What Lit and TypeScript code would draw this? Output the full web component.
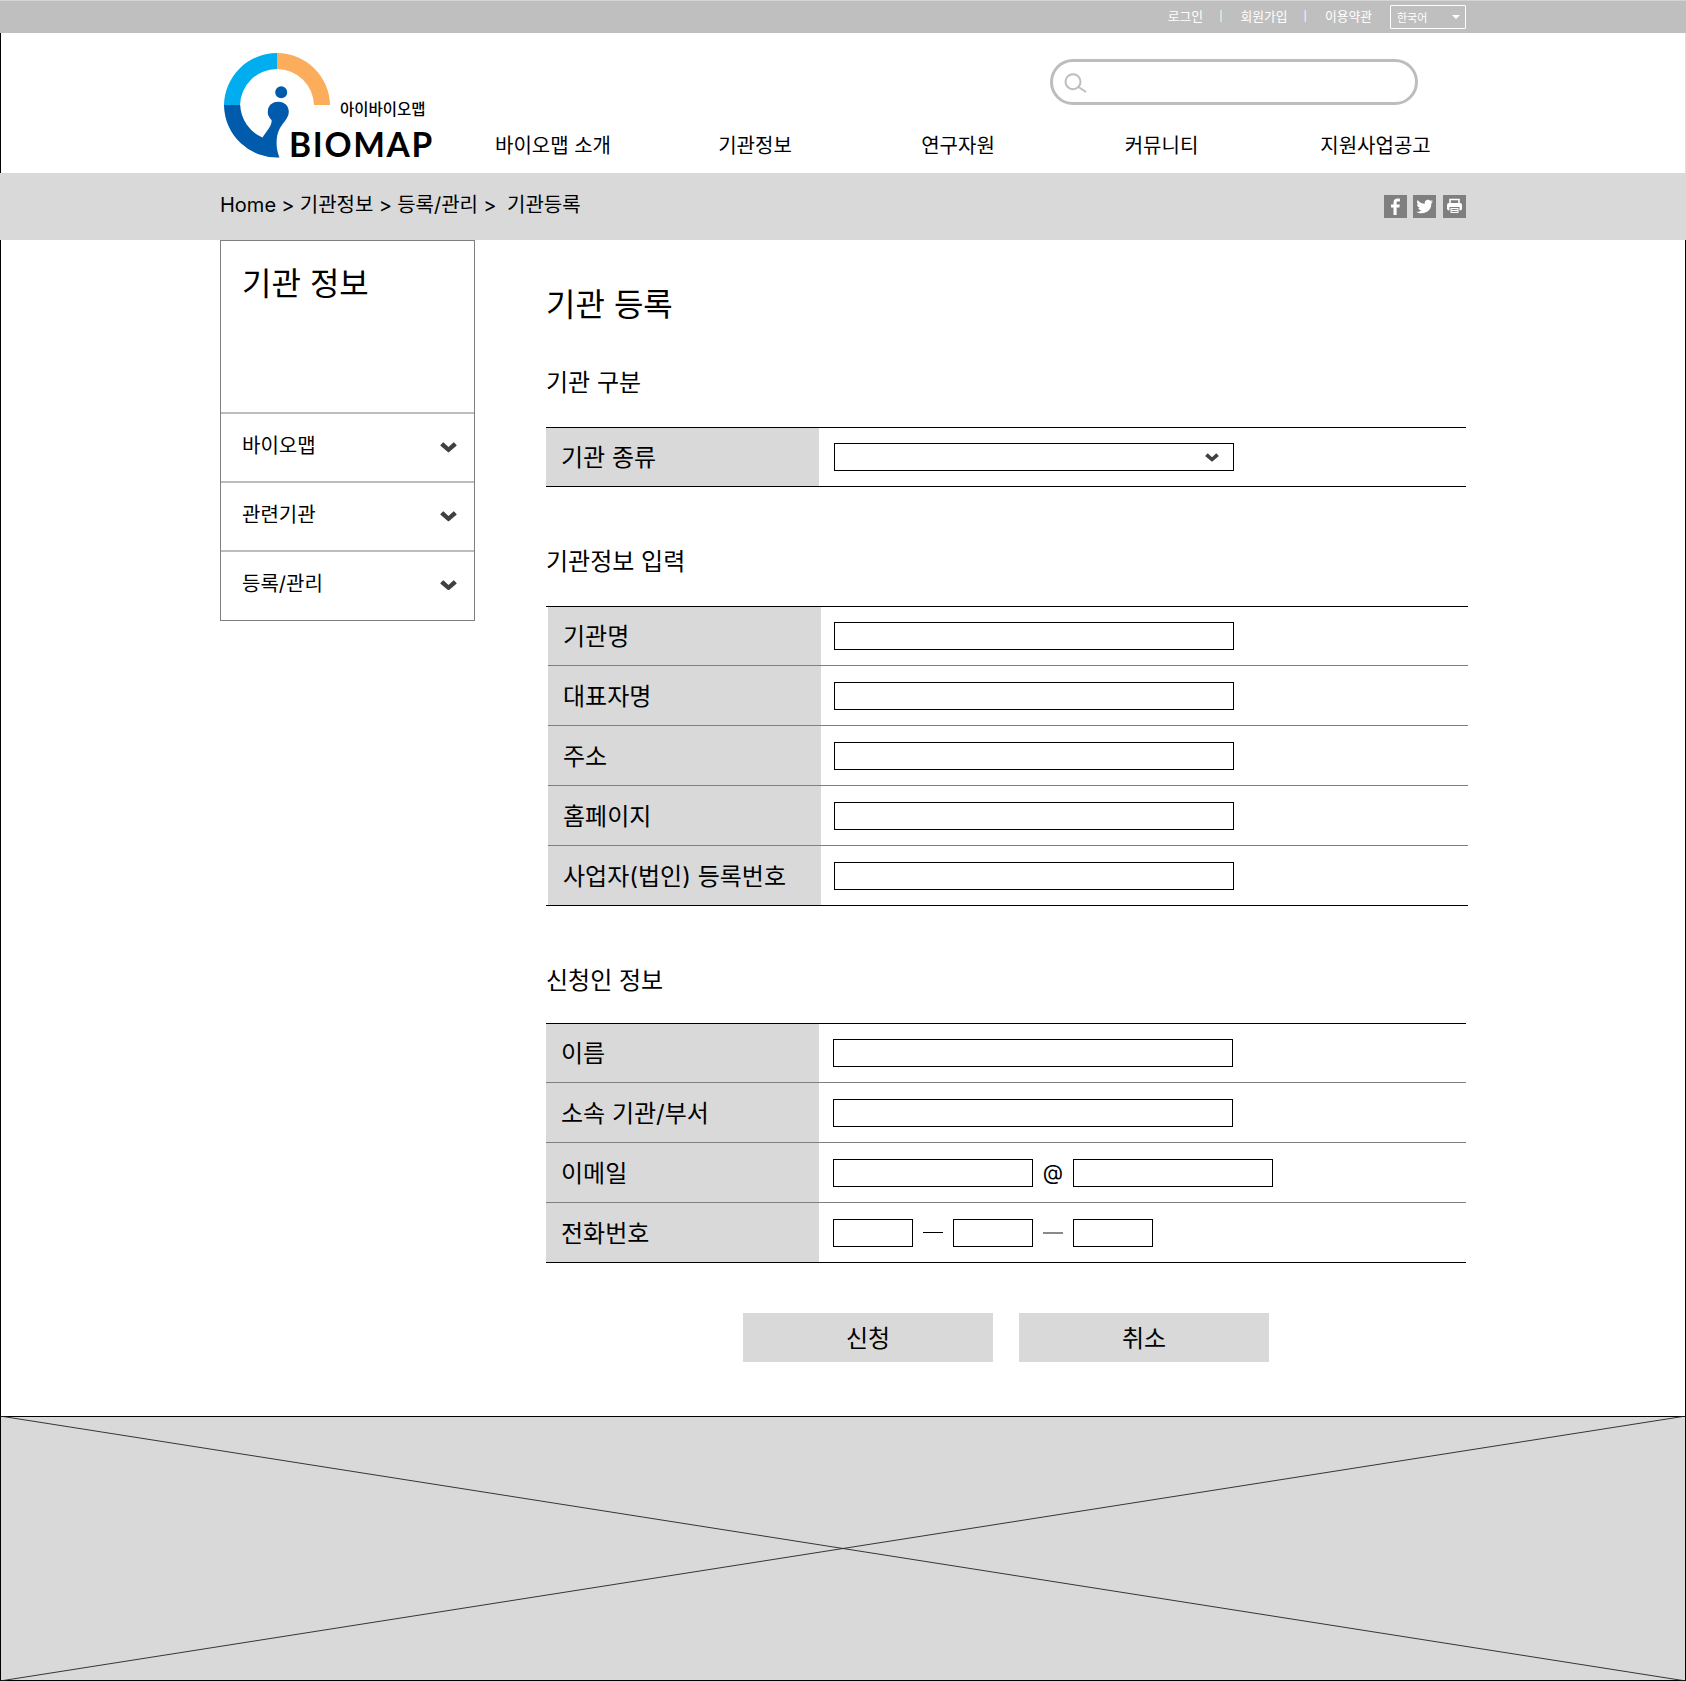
import { LitElement, html, css, svg } from 'lit';
import { customElement } from 'lit/decorators.js';

// 사이드메뉴(17x10)와 셀렉트(14x9)에 같이 쓰는 화살표
const chevron = (w: number, h: number) => html`
  <svg class="chev" width=${w} height=${h} viewBox="0 0 17 10.500" aria-hidden="true">
    <path d="M0.500 3 L2.900 0.500 Q3.200 0.200 3.600 0.500 L8.500 4.900 L13.400 0.500 Q13.800 0.200 14.100 0.500 L16.500 3 Q16.800 3.300 16.500 3.700 L8.900 10.200 Q8.500 10.500 8.100 10.200 L0.500 3.700 Q0.200 3.300 0.500 3 Z" fill="#404040" />
  </svg>
`;

// 로고: 링 세 조각과 i 모양
const logo = svg`
  <path d="M277 53 A53 53 0 0 1 330 105 H314 A37 37 0 0 0 277 69 Z" fill="#fbad5b" />
  <path d="M224 105 A53 53 0 0 1 277 53 V69 A37 37 0 0 0 240 105 Z" fill="#00aeef" />
  <path d="M224 105 H240.200 A37 37 0 0 0 262.500 137.500 C266.500 131 272.500 125 271.500 120 C268.500 117 267.500 114 267.800 111.700
    C268 105 272.500 101.700 278.500 101.700 C284.500 101.700 288.800 106 288.800 111.700 C288.800 118 283.500 122 280 128
    C275.500 136 275.500 148 279.500 157.500 A53 53 0 0 1 224 105 Z" fill="#005bac" />
  <circle cx="281.200" cy="92.300" r="6" fill="#005bac" />
`;

@customElement('app-root')
export class AppRoot extends LitElement {
  static styles = css`
    :host {
      display: block;
      width: 1686px;
      font-family: Inter, "Noto Sans CJK KR", sans-serif;
      color: #000;
      background: #fff;
    }
    * { box-sizing: border-box; }

    .topbar {
      height: 33px;
      background: #bfbfbf;
      border-top: 1px solid #d4d4d4;
      display: flex;
      justify-content: flex-end;
      align-items: center;
      padding-right: 220px;
      color: #fff;
      font-size: 12.800px;
    }
    .topbar > span { margin-bottom: 3px; }
    .topbar .sep { margin: 0 18px 3px 16px; font-size: 10px; }
    .lang {
      width: 76px;
      height: 24px;
      margin-left: 18px;
      border: 1px solid #fff;
      border-radius: 1px;
      display: flex;
      align-items: center;
      justify-content: space-between;
      padding: 0 5px 0 6px;
      font-size: 11px;
    }
    .lang i {
      border: 4px solid transparent;
      border-top-color: #fff;
      border-bottom: 0;
    }

    .header {
      height: 140px;
      display: flex;
      padding-left: 219px;
      border-left: 1px solid #000;
      border-right: 1px solid #ddd;
    }
    .logo { display: block; flex: none; }
    .logo .sub { font-size: 15.500px; font-weight: 500; }
    .logo .brand { font-size: 33.500px; font-weight: 700; font-family: Lato, sans-serif; letter-spacing: 1.700px; }
    .head-right { display: flex; flex-direction: column; }
    .search {
      width: 368px;
      height: 46px;
      margin: 26px 0 0 598px;
      border: 3px solid #bdbdbd;
      border-radius: 23px;
      display: flex;
      align-items: center;
      padding-left: 10px;
    }
    .nav {
      display: grid;
      grid-template-columns: 202px 202px 204px 203px 225px;
      margin-top: 27px;
      font-size: 20px;
      line-height: 28px;
      text-align: center;
    }

    .crumbs {
      height: 67px;
      background: #d9d9d9;
      display: flex;
      justify-content: space-between;
      align-items: center;
      padding: 0 220px;
      font-size: 20px;
    }
    .crumbs .trail { white-space: pre; margin-bottom: 7px; word-spacing: -0.350px; }
    .share { display: flex; gap: 6px; }
    .share svg { display: block; }
    .share svg:last-child { margin-left: 1px; }

    .body {
      display: flex;
      padding-left: 219px;
      height: 1176px;
      border-left: 1px solid #000;
      border-right: 1px solid #000;
    }
    .side {
      width: 255px;
      height: 381px;
      border: 1px solid #7f7f7f;
      display: flex;
      flex-direction: column;
    }
    .side h2 {
      margin: 0;
      height: 171px;
      padding: 21px 21px;
      font-size: 32px;
      line-height: 44px;
      font-weight: 400;
    }
    .side .item {
      height: 69px;
      border-top: 2px solid #bdbdbd;
      display: flex;
      align-items: center;
      justify-content: space-between;
      padding: 0 17px 6px 21px;
      font-size: 20px;
    }
    .side .item:last-child { height: 70px; padding-bottom: 8px; }
    .side .item .chev { margin-top: 6px; }

    .main { margin-left: 71px; width: 920px; }
    .main h1 {
      margin: 0;
      padding-top: 42px;
      font-size: 32px;
      line-height: 46px;
      font-weight: 400;
    }
    .main h3 {
      margin: 0;
      font-size: 24px;
      line-height: 34px;
      font-weight: 400;
    }
    .form {
      border-top: 1px solid #000;
      border-bottom: 1px solid #000;
      margin-top: 27px;
    }
    .row {
      height: 60px;
      display: flex;
      align-items: stretch;
    }
    .row:first-child { height: 58px; }
    .row + .row { border-top: 1px solid #7f7f7f; }
    .row .label {
      width: 273px;
      background: #d9d9d9;
      display: flex;
      align-items: center;
      padding: 0 0 3px 15px;
      font-size: 24px;
    }
    .row .value {
      flex: 1;
      display: flex;
      align-items: center;
      padding-left: 15px;
      font-size: 21px;
    }
    .box {
      height: 28px;
      border: 1px solid #000;
      background: #fff;
      display: flex;
      align-items: center;
      justify-content: flex-end;
      padding-right: 14px;
    }
    .box.full { width: 400px; }
    .box.mail { width: 200px; }
    .box.tel { width: 80px; padding: 0; }
    .at { width: 40px; text-align: center; }
    .dash { width: 40px; display: flex; justify-content: center; }
    .dash::before { content: ''; width: 20px; height: 1px; background: #000; }
    .dash.grey::before { background: #8a8a8a; height: 2px; }

    .sec1 { margin-top: 38px; }
    .sec2 { margin-top: 58px; }
    .sec2 .form { width: 922px; padding-left: 2px; }
    .sec2 .row .value { padding-left: 13px; }
    .sec3 { margin-top: 58px; }
    .sec3 .form { margin-top: 25px; }
    .sec3 .row .value { padding-left: 14px; }

    .actions {
      display: flex;
      gap: 26px;
      padding-left: 197px;
      margin-top: 50px;
    }
    .actions div {
      width: 250px;
      height: 49px;
      background: #d9d9d9;
      display: flex;
      align-items: center;
      justify-content: center;
      padding-bottom: 3px;
      font-size: 24px;
    }

    .footer { display: block; width: 1686px; height: 265px; }
  `;

  private row(label: string, value: unknown) {
    return html`<div class="row"><div class="label">${label}</div><div class="value">${value}</div></div>`;
  }

  render() {
    const full = html`<div class="box full"></div>`;
    return html`
      <div class="topbar">
        <span>로그인</span><span class="sep">|</span>
        <span>회원가입</span><span class="sep">|</span>
        <span>이용약관</span>
        <div class="lang"><span>한국어</span><i></i></div>
      </div>

      <div class="header">
        <svg class="logo" width="232" height="140" viewBox="220 33 232 140">
          ${logo}
          <text class="sub" x="340" y="115">아이바이오맵</text>
          <text class="brand" x="289" y="157">BIOMAP</text>
        </svg>
        <div class="head-right">
          <div class="search">
            <svg width="24" height="24" viewBox="0 0 24 24" fill="none" stroke="#bdbdbd" stroke-width="2">
              <circle cx="10" cy="11.700" r="7.500" />
              <path d="M15.500 17 L23 22" />
            </svg>
          </div>
          <div class="nav">
            <span>바이오맵 소개</span>
            <span>기관정보</span>
            <span>연구자원</span>
            <span>커뮤니티</span>
            <span>지원사업공고</span>
          </div>
        </div>
      </div>

      <div class="crumbs">
        <div class="trail">Home &gt; 기관정보 &gt; 등록/관리 &gt;  기관등록</div>
        <div class="share">
          <svg width="23" height="23" viewBox="0 0 23 23">
            <rect width="23" height="23" fill="#7f7f7f" />
            <path d="M12.600 20 V12.600 H15.400 L15.800 9.600 H12.600 V7.800 C12.600 6.900 12.900 6.400 14 6.400 H15.900 V3.700 C15.500 3.600 14.600 3.500 13.500 3.500 C11.100 3.500 9.500 5 9.500 7.500 V9.600 H7 V12.600 H9.500 V20 Z" fill="#fff" />
          </svg>
          <svg width="23" height="23" viewBox="0 0 23 23">
            <rect width="23" height="23" fill="#7f7f7f" />
            <path d="M20 6.300 C19.300 6.600 18.700 6.800 18 6.900 C18.700 6.400 19.300 5.700 19.600 4.900 C18.900 5.300 18.200 5.600 17.400 5.800 C15.800 4 12.900 4.700 12 6.500 C11.700 7.200 11.600 8 11.800 8.800 C9 8.700 6.300 7.300 4.500 5.100 C3.600 6.700 4 8.700 5.600 9.800 C5 9.800 4.500 9.600 4 9.300 C4 11 5.200 12.500 6.800 12.900 C6.300 13 5.700 13 5.200 12.900 C5.700 14.300 7 15.300 8.500 15.400 C7 16.500 5 17.100 3.200 16.800 C7.500 19.500 13.500 18.500 16.500 14.500 C17.800 12.800 18.400 10.600 18.300 8.500 C18.900 8 19.500 7.200 20 6.300 Z" fill="#fff" />
          </svg>
          <svg width="23" height="23" viewBox="0 0 23 23">
            <rect width="23" height="23" fill="#7f7f7f" />
            <path d="M7 8 V4.500 H16 V8" fill="none" stroke="#fff" stroke-width="1.600" />
            <rect x="4" y="8" width="15" height="7.500" rx="2" fill="#fff" />
            <rect x="7" y="12.500" width="9" height="6" fill="#fff" stroke="#7f7f7f" stroke-width="1" />
            <path d="M8.500 14.500 H14.500 M8.500 16.500 H14.500" stroke="#7f7f7f" stroke-width="0.900" />
          </svg>
        </div>
      </div>

      <div class="body">
        <aside class="side">
          <h2>기관 정보</h2>
          ${['바이오맵', '관련기관', '등록/관리'].map(
            (m) => html`<div class="item"><span>${m}</span>${chevron(17, 10.5)}</div>`
          )}
        </aside>
        <main class="main">
          <h1>기관 등록</h1>
          <section class="sec1">
            <h3>기관 구분</h3>
            <div class="form">
              ${this.row('기관 종류', html`<div class="box full">${chevron(14, 9)}</div>`)}
            </div>
          </section>
          <section class="sec2">
            <h3>기관정보 입력</h3>
            <div class="form">
              ${['기관명', '대표자명', '주소', '홈페이지', '사업자(법인) 등록번호'].map((l) => this.row(l, full))}
            </div>
          </section>
          <section class="sec3">
            <h3>신청인 정보</h3>
            <div class="form">
              ${this.row('이름', full)}
              ${this.row('소속 기관/부서', full)}
              ${this.row('이메일', html`<div class="box mail"></div><span class="at">@</span><div class="box mail"></div>`)}
              ${this.row(
                '전화번호',
                html`<div class="box tel"></div><span class="dash"></span><div class="box tel"></div><span class="dash grey"></span><div class="box tel"></div>`
              )}
            </div>
          </section>
          <div class="actions"><div>신청</div><div>취소</div></div>
        </main>
      </div>

      <svg class="footer" viewBox="0 0 1686 265">
        <rect x="0.500" y="0.500" width="1685" height="264" fill="#d9d9d9" stroke="#000" />
        <path d="M0 0 L1686 265 M1686 0 L0 265" stroke="#222" stroke-width="0.900" fill="none" />
      </svg>
    `;
  }
}
